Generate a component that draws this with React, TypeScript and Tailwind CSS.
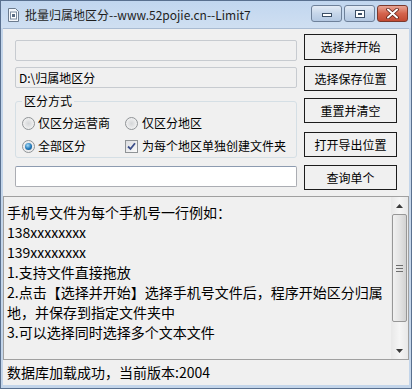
import React from "react";

function Radio({ checked }: { checked?: boolean }) {
  return (
    <span className="w-[13px] h-[13px] shrink-0 rounded-full border border-[#8f9396] bg-[radial-gradient(circle_at_50%_50%,#d4d6d8,#f4f4f4_80%)] flex items-center justify-center">
      {checked && (
        <span className="w-[7px] h-[7px] rounded-full bg-[radial-gradient(circle_at_40%_35%,#a8dcf8,#2077b8_55%,#0d4a80)]" />
      )}
    </span>
  );
}

function Check() {
  return (
    <span className="w-[13px] h-[13px] shrink-0 border border-[#8f9396] bg-gradient-to-br from-[#dcdde0] to-[#fbfbfb] flex items-center justify-center">
      <svg width="9" height="9" viewBox="0 0 9 9">
        <path d="M1 4.5 L3.5 7 L8 1.2" fill="none" stroke="#3c4f8a" strokeWidth="1.8" />
      </svg>
    </span>
  );
}

function Btn({ label, cls }: { label: string; cls: string }) {
  return (
    <div className={`w-[93px] border border-[#1c1c1c] bg-[#f0f0f0] flex items-center justify-center text-[12px] text-black ${cls}`}>
      {label}
    </div>
  );
}

export default function App() {
  return (
    <div className="w-[412px] h-[389px] bg-[#c3d5ea] border border-[#59708f] flex flex-col font-['Noto_Sans_CJK_SC',sans-serif] overflow-hidden">
      {/* title bar */}
      <div className="h-[27px] shrink-0 flex items-center bg-gradient-to-b from-[#c1d6ef] to-[#cfdff1] relative">
        <svg className="ml-[7px]" width="11" height="14" viewBox="0 0 11 14">
          <path d="M0.5 0.5 H7.5 L10.5 3.5 V13.5 H0.5 Z" fill="#f4f7fb" stroke="#6b7b8e" />
          <rect x="2.5" y="4" width="6" height="7" fill="#ffffff" stroke="#7b8ca0" />
          <rect x="4" y="6" width="3" height="3" fill="#5a6c82" />
        </svg>
        <span className="ml-[6px] text-[12px] text-[#1e1e1e]">批量归属地区分--www.52pojie.cn--Limit7</span>
        <div className="absolute right-[3px] top-[4px] flex gap-[2px]">
          <div className="w-[31px] h-[17px] rounded-[3px] border border-[#6e819a] bg-gradient-to-b from-[#e4ecf6] via-[#c6d6ea] to-[#b3c8e2] flex items-end justify-center pb-[4px]">
            <span className="w-[10px] h-[4px] bg-white border border-[#3c4f66]" />
          </div>
          <div className="w-[31px] h-[17px] rounded-[3px] border border-[#6e819a] bg-gradient-to-b from-[#e4ecf6] via-[#c6d6ea] to-[#b3c8e2] flex items-center justify-center">
            <span className="w-[10px] h-[8px] border border-[#3c4f66] bg-white flex items-center justify-center">
              <span className="w-[4px] h-[2px] border border-[#3c4f66]" />
            </span>
          </div>
          <div className="w-[31px] h-[17px] rounded-[3px] border border-[#7b3a2e] bg-gradient-to-b from-[#e8a494] via-[#d4644d] to-[#c24a33] flex items-center justify-center">
            <svg width="13" height="11" viewBox="0 0 13 11">
              <path d="M2 1.5 L11 9.5 M11 1.5 L2 9.5" stroke="#5a1f16" strokeWidth="3.6" strokeLinecap="round" />
              <path d="M2 1.5 L11 9.5 M11 1.5 L2 9.5" stroke="#ffffff" strokeWidth="2" strokeLinecap="round" />
            </svg>
          </div>
        </div>
      </div>

      {/* client */}
      <div className="flex-1 mx-[2px] mb-[3px] bg-[#f0f0f0] border-t border-[#a9bbd2] flex flex-col text-[12px] text-black">
        <div className="h-[167px] shrink-0 flex pl-[12px] gap-[7px]">
          <div className="w-[282px] flex flex-col">
            <div className="mt-[11px] h-[21px] rounded-[2px] border border-[#c7cbd0] bg-[#f0f0f0]" />
            <div className="mt-[6px] h-[21px] rounded-[2px] border border-[#c7cbd0] bg-[#f0f0f0] flex items-center pl-[3px]">
              D:\归属地区分
            </div>
            <div className="mt-[13px] h-[57px] rounded-[3px] border border-[#d5dfe5] relative flex flex-col gap-[5px] pt-[12px] pl-[6px]">
              <span className="absolute -top-[9px] left-[6px] px-[2px] bg-[#f0f0f0] leading-[16px]">区分方式</span>
              <div className="grid grid-cols-[103px_1fr] h-[18px] items-center">
                <div className="flex items-center gap-[3px]">
                  <Radio />
                  <span>仅区分运营商</span>
                </div>
                <div className="flex items-center gap-[4px]">
                  <Radio />
                  <span>仅区分地区</span>
                </div>
              </div>
              <div className="grid grid-cols-[103px_1fr] h-[18px] items-center">
                <div className="flex items-center gap-[3px]">
                  <Radio checked />
                  <span>全部区分</span>
                </div>
                <div className="flex items-center gap-[4px]">
                  <Check />
                  <span>为每个地区单独创建文件夹</span>
                </div>
              </div>
            </div>
            <div className="mt-[8px] h-[21px] rounded-[2px] border border-[#abadb3] border-t-[#8d9bb0] bg-white" />
          </div>
          <div className="flex flex-col">
            <Btn label="选择并开始" cls="mt-[5px] h-[26px]" />
            <Btn label="选择保存位置" cls="mt-[6px] h-[25px]" />
            <Btn label="重置并清空" cls="mt-[7px] h-[25px]" />
            <Btn label="打开导出位置" cls="mt-[9px] h-[25px]" />
            <Btn label="查询单个" cls="mt-[8px] h-[25px]" />
          </div>
        </div>

        {/* text area */}
        <div className="h-[164px] shrink-0 border border-[#a0a0a0] flex">
          <div className="flex-1 pl-[3px] pt-[5px] text-[14px] leading-[20px] text-black">
            <div>手机号文件为每个手机号一行例如：</div>
            <div>138xxxxxxxx</div>
            <div>139xxxxxxxx</div>
            <div>1.支持文件直接拖放</div>
            <div>2.点击【选择并开始】选择手机号文件后，程序开始区分归属地，并保存到指定文件夹中</div>
            <div>3.可以选择同时选择多个文本文件</div>
          </div>
          <div className="w-[17px] shrink-0 flex flex-col bg-gradient-to-r from-[#e8e8e8] via-[#f5f5f5] to-[#e8e8e8]">
            <div className="h-[17px] flex items-center justify-center">
              <svg width="7" height="4" viewBox="0 0 7 4">
                <path d="M0 4 L3.5 0 L7 4 Z" fill="#3a3a3a" />
              </svg>
            </div>
            <div className="mx-[1px] h-[108px] rounded-[2px] border border-[#979797] bg-gradient-to-r from-[#f1f1f1] via-[#e4e4e4] to-[#d2d2d2] flex items-center justify-center">
              <div className="flex flex-col gap-[2px]">
                <span className="w-[7px] h-px bg-[#6e6e6e]" />
                <span className="w-[7px] h-px bg-[#6e6e6e]" />
                <span className="w-[7px] h-px bg-[#6e6e6e]" />
              </div>
            </div>
            <div className="flex-1" />
            <div className="h-[17px] flex items-center justify-center">
              <svg width="7" height="4" viewBox="0 0 7 4">
                <path d="M0 0 L3.5 4 L7 0 Z" fill="#3a3a3a" />
              </svg>
            </div>
          </div>
        </div>

        {/* status bar */}
        <div className="flex-1 flex items-center pl-[4px] text-[14px] text-black">
          数据库加载成功，当前版本:2004
        </div>
      </div>
    </div>
  );
}
